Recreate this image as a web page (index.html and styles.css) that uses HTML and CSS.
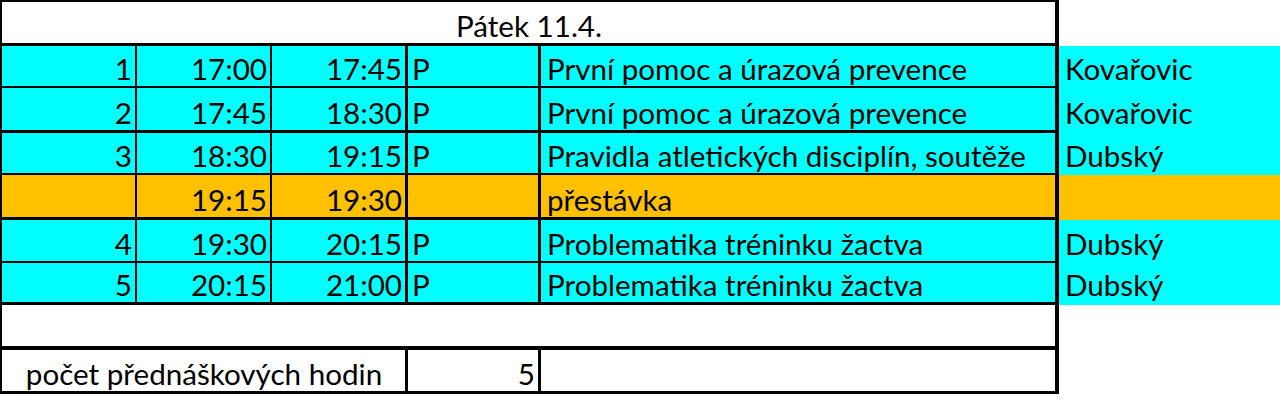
FILE: index.html
```html
<!DOCTYPE html>
<html lang="cs">
<head>
<meta charset="utf-8">
<title>Pátek 11.4.</title>
<link rel="stylesheet" href="styles.css">
</head>
<body>
<div class="sheet">
  <div class="row hdr">
    <div class="cell first span5 center top">Pátek 11.4.</div>
    <div class="tch"></div>
  </div>
  <div class="row cy b2">
    <div class="cell first r">1</div>
    <div class="cell r">17:00</div>
    <div class="cell r w3">17:45</div>
    <div class="cell w3">P</div>
    <div class="cell w4 txt">První pomoc a úrazová prevence</div>
    <div class="tch">Kovařovic</div>
  </div>
  <div class="row cy b3">
    <div class="cell first r">2</div>
    <div class="cell r">17:45</div>
    <div class="cell r w3">18:30</div>
    <div class="cell w3">P</div>
    <div class="cell w4 txt">První pomoc a úrazová prevence</div>
    <div class="tch">Kovařovic</div>
  </div>
  <div class="row cy b2">
    <div class="cell first r">3</div>
    <div class="cell r">18:30</div>
    <div class="cell r w3">19:15</div>
    <div class="cell w3">P</div>
    <div class="cell w4 txt">Pravidla atletických disciplín, soutěže</div>
    <div class="tch">Dubský</div>
  </div>
  <div class="row or b3">
    <div class="cell first r"></div>
    <div class="cell r">19:15</div>
    <div class="cell r w3">19:30</div>
    <div class="cell w3"></div>
    <div class="cell w4 txt">přestávka</div>
    <div class="tch"></div>
  </div>
  <div class="row cy b2">
    <div class="cell first r">4</div>
    <div class="cell r">19:30</div>
    <div class="cell r w3">20:15</div>
    <div class="cell w3">P</div>
    <div class="cell w4 txt">Problematika tréninku žactva</div>
    <div class="tch">Dubský</div>
  </div>
  <div class="row cy b3">
    <div class="cell first r">5</div>
    <div class="cell r">20:15</div>
    <div class="cell r w3">21:00</div>
    <div class="cell w3">P</div>
    <div class="cell w4 txt">Problematika tréninku žactva</div>
    <div class="tch">Dubský</div>
  </div>
  <div class="row b4">
    <div class="cell first span5 w4"></div>
    <div class="tch"></div>
  </div>
  <div class="row b3 last">
    <div class="cell first span3 center w3">počet přednáškových hodin</div>
    <div class="cell r w3">5</div>
    <div class="cell w4"></div>
    <div class="tch"></div>
  </div>
</div>
</body>
</html>
```

FILE: styles.css
```css
html, body {
  margin: 0;
  padding: 0;
  background: #fff;
}

.sheet {
  display: grid;
  grid-template-columns: 137px 135px 136px 133px 518px 221px;
  grid-template-rows: 46px 42px 45px 42px 45px 43px 42px 45px 44px;
  width: 1280px;
  font-family: "Lato", "Liberation Sans", sans-serif;
  font-size: 29.6px;
  color: #000;
  --bb: 2px;
}

.row { display: contents; }
.row.b2 { --bb: 2px; }
.row.b3 { --bb: 3px; }
.row.b4 { --bb: 4px; }
.row.hdr { --bb: 3px; }

.cell {
  box-sizing: border-box;
  display: flex;
  align-items: flex-end;
  padding: 0 3px 0 4px;
  line-height: 1.2;
  white-space: nowrap;
  border-right: 2px solid #000;
  border-bottom: var(--bb) solid #000;
}

.tch {
  box-sizing: border-box;
  display: flex;
  align-items: flex-end;
  padding: 0 4px var(--bb) 6px;
  line-height: 1.2;
  white-space: nowrap;
}

.cy .cell, .cy .tch { background: #00ffff; }
.or .cell, .or .tch { background: #ffc000; }

.first { border-left: 2px solid #000; }
.top { border-top: 2px solid #000; }
.r { justify-content: flex-end; }
.center { justify-content: center; }
.w3 { border-right-width: 3px; }
.w4 { border-right-width: 4px; }
.txt { padding-left: 6px; }
.span5 { grid-column: 1 / 6; }
.span3 { grid-column: 1 / 4; }
.span5.top { border-right-width: 4px; }
```
